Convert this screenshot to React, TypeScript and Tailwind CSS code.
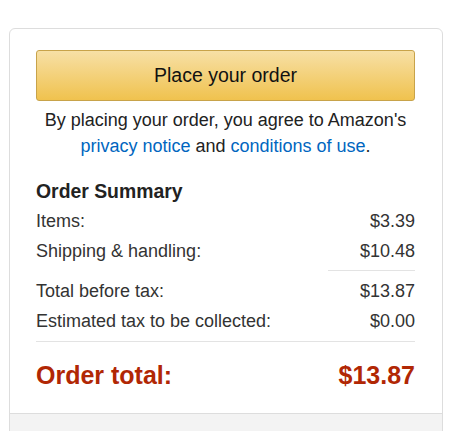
export default function App() {
  const rows = [
    { label: "Items:", value: "$3.39" },
    { label: "Shipping & handling:", value: "$10.48" },
  ];
  const taxRows = [
    { label: "Total before tax:", value: "$13.87" },
    { label: "Estimated tax to be collected:", value: "$0.00" },
  ];

  return (
    <div className="min-h-screen bg-white pt-[28px] pl-[9px] font-['Liberation_Sans',Arial,sans-serif] text-[#222]">
      <div className="w-[434px] border border-[#dddddd] rounded-[6px] overflow-hidden">
        <div className="pl-[26px] pr-[27px] pt-[21px] pb-[23px]">
          <button className="w-full h-[51px] rounded-[3px] border border-[#c8a34a] bg-[linear-gradient(to_bottom,#f7e0a6,#f0c24e)] text-[19.5px] text-[#111]">
            Place your order
          </button>

          <p className="mt-[6px] text-center text-[18px] leading-[26px] text-[#222]">
            By placing your order, you agree to Amazon's{" "}
            <a className="text-[#0066c0]">privacy notice</a> and{" "}
            <a className="text-[#0066c0]">conditions of use</a>.
          </p>

          <h3 className="mt-[20px] text-[19.4px] leading-[24px] font-bold text-[#222]">
            Order Summary
          </h3>

          <div className="mt-[3px] text-[18px] text-[#333]">
            {rows.map((r) => (
              <div key={r.label} className="flex justify-between leading-[30px]">
                <span>{r.label}</span>
                <span>{r.value}</span>
              </div>
            ))}
            <div className="flex justify-end mt-[4px] mb-[5px]">
              <div className="w-[87px] h-px bg-[#e3e3e3]" />
            </div>
            {taxRows.map((r) => (
              <div key={r.label} className="flex justify-between leading-[30px]">
                <span>{r.label}</span>
                <span>{r.value}</span>
              </div>
            ))}
          </div>

          <div className="mt-[5px] h-px bg-[#e3e3e3]" />

          <div className="mt-[18px] flex justify-between text-[25px] leading-[30px] font-bold text-[#b12704]">
            <span>Order total:</span>
            <span>$13.87</span>
          </div>
        </div>
        <div className="h-[40px] border-t border-[#dddddd] bg-[#f3f3f3]" />
      </div>
    </div>
  );
}
